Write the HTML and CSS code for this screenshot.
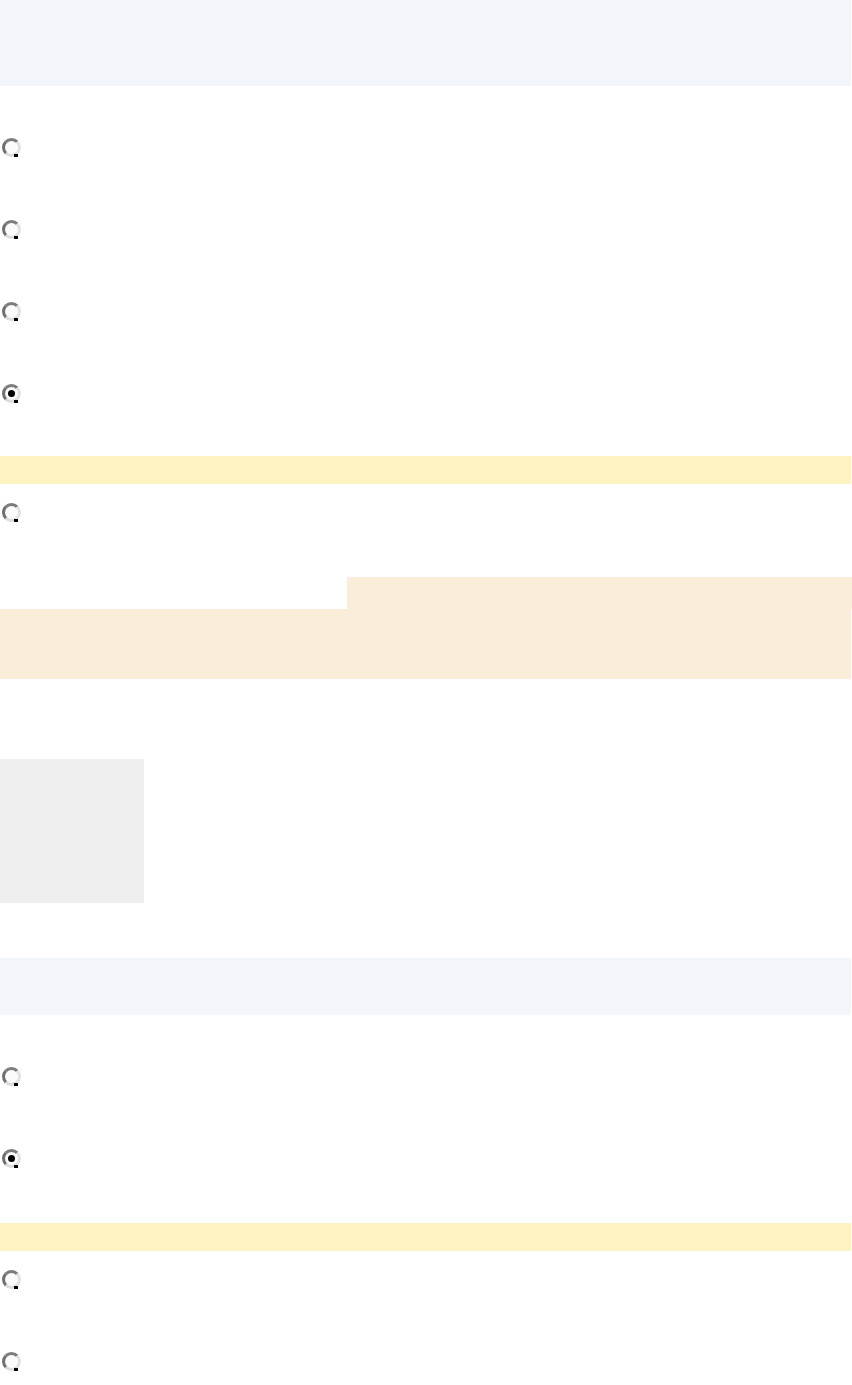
FILE: index.html
```html
<!DOCTYPE html>
<html lang="en">
<head>
<meta charset="utf-8">
<title>Options</title>
<link rel="stylesheet" href="styles.css">
</head>
<body>
<div class="page">
  <header class="header"></header>

  <div class="group group--first">
    <div class="opt"><span class="radio"></span></div>
    <div class="opt"><span class="radio"></span></div>
    <div class="opt"><span class="radio"></span></div>
    <div class="opt"><span class="radio radio--on"></span></div>
  </div>

  <div class="notice notice--a"></div>
  <div class="opt"><span class="radio"></span></div>

  <div class="callout">
    <div class="callout-tab"></div>
    <div class="callout-body"></div>
  </div>

  <div class="thumb"></div>

  <div class="header header--small"></div>

  <div class="group group--first">
    <div class="opt"><span class="radio"></span></div>
    <div class="opt"><span class="radio radio--on"></span></div>
  </div>

  <div class="notice notice--b"></div>
  <div class="opt"><span class="radio"></span></div>
  <div class="opt"><span class="radio"></span></div>
</div>
</body>
</html>
```

FILE: styles.css
```css
html, body {
  margin: 0;
  padding: 0;
  background: #ffffff;
  font-family: "Liberation Sans", Arial, sans-serif;
}

.page {
  width: 851px;
}

.header {
  height: 86px;
  background: #f2f6fa;
}

.header--small {
  height: 57px;
  margin-top: 55px;
}

.group--first {
  margin-top: 33px;
}

.opt {
  height: 82px;
  box-sizing: border-box;
  padding: 19px 0 0 2px;
}

.radio {
  display: block;
  position: relative;
  width: 19px;
  height: 19px;
  box-sizing: border-box;
  border-radius: 50%;
  border: 3px solid;
  border-color: #7c7c7c #e2e2e2 #dcdcdc #6f6f6f;
  background: #fbfbfb;
}

.radio::after {
  content: "";
  position: absolute;
  right: 0;
  bottom: -3px;
  width: 4px;
  height: 3px;
  background: #000;
}

.radio--on::before {
  content: "";
  position: absolute;
  left: 3px;
  top: 3px;
  width: 7px;
  height: 7px;
  border-radius: 50%;
  background: #000;
}

.notice {
  height: 28px;
  background: #fff2c2;
}

.notice--a {
  margin-top: 9px;
}

.notice--b {
  margin-top: 11px;
}

.callout {
  margin-top: 11px;
}

.callout-tab {
  height: 32px;
  margin-left: 347px;
  width: 505px;
  background: #faeedb;
}

.callout-body {
  height: 70px;
  background: #faeedb;
}

.thumb {
  margin-top: 80px;
  width: 144px;
  height: 144px;
  background: #efefef;
}
```
